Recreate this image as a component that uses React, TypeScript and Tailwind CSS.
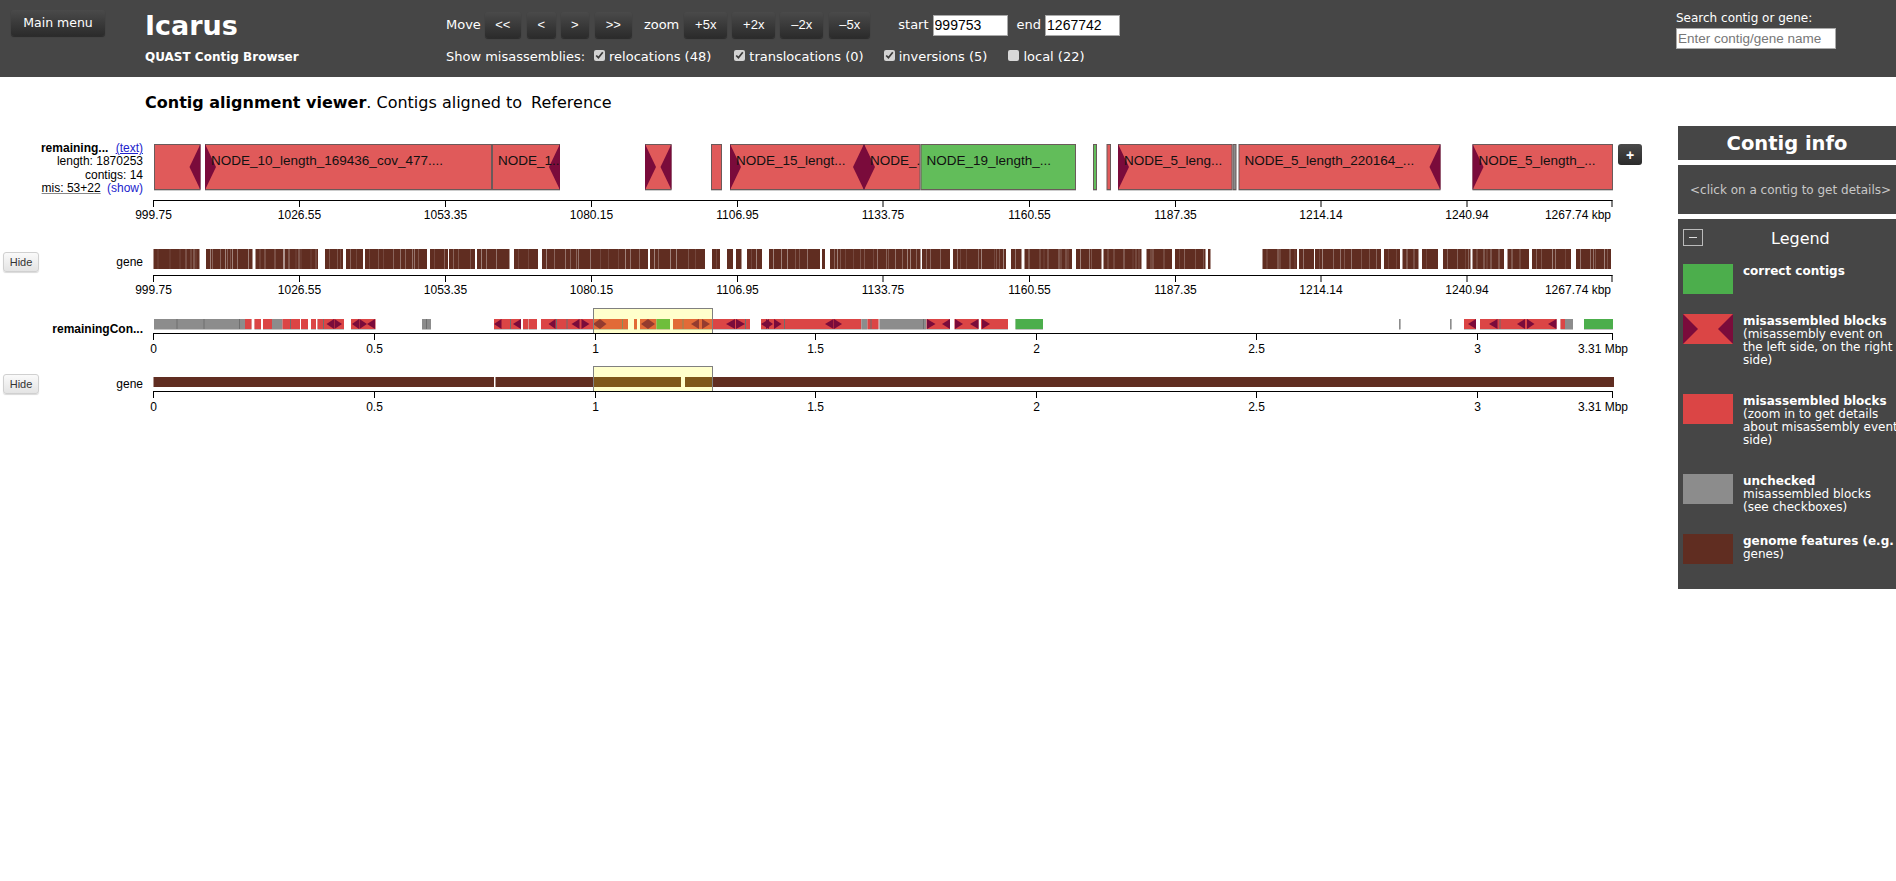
import type { ReactNode } from "react"

const RED = "#e05a5a"
const GREEN = "#62bd5a"
const DARK = "#7a0b3b"
const ORED = "#db4545"
const OGREY = "#8c8c8c"
const OGREEN = "#4cae4c"
const BROWN = "#602d21"

type Block = { x1: number; x2: number; fill: string; label?: string; left?: boolean; right?: boolean }

const topBlocks: Block[] = [
  { x1: 154, x2: 200.5, fill: RED, right: true },
  { x1: 205, x2: 492, fill: RED, left: true, label: "NODE_10_length_169436_cov_477...." },
  { x1: 492, x2: 560, fill: RED, right: true, label: "NODE_1..." },
  { x1: 645, x2: 671.5, fill: RED, left: true, right: true },
  { x1: 711, x2: 722, fill: RED },
  { x1: 730, x2: 864, fill: RED, left: true, right: true, label: "NODE_15_lengt..." },
  { x1: 864, x2: 920.5, fill: RED, left: true, label: "NODE_..." },
  { x1: 920.5, x2: 1076, fill: GREEN, label: "NODE_19_length_..." },
  { x1: 1093, x2: 1097, fill: GREEN },
  { x1: 1106.5, x2: 1111, fill: RED },
  { x1: 1118, x2: 1232.5, fill: RED, left: true, label: "NODE_5_leng..." },
  { x1: 1232.5, x2: 1236.5, fill: "#8a8a8a" },
  { x1: 1238.5, x2: 1440.5, fill: RED, right: true, label: "NODE_5_length_220164_..." },
  { x1: 1472.5, x2: 1613, fill: RED, left: true, label: "NODE_5_length_..." },
]

// [start, end, colour]
const overview: [number, number, string][] = [
  [154, 245, OGREY],
  [245, 251.5, ORED], [254.5, 261, ORED], [263, 272, ORED], [272, 282.5, OGREY],
  [282.5, 300, ORED], [301, 308, ORED], [311, 316, ORED],
  [317.5, 344, ORED], [351, 375.5, ORED], [422, 431, OGREY],
  [494, 521, ORED], [523, 528.5, ORED], [529, 537, ORED],
  [541, 628, ORED],
  [634, 637, ORED], [640, 656.5, ORED], [656.5, 670, OGREEN],
  [673, 750, ORED],
  [761, 861.5, ORED], [861.5, 867.5, OGREY], [867.5, 878.5, ORED],
  [879.5, 926.5, OGREY], [926.5, 950, ORED], [954.5, 978.5, ORED], [981, 1008, ORED],
  [1015.5, 1043, OGREEN], [1399, 1400.5, OGREY], [1450, 1451.5, OGREY],
  [1464, 1476, ORED], [1480, 1556.5, ORED], [1560.5, 1565, ORED], [1565, 1573, OGREY],
  [1584, 1613, OGREEN],
]

// thin lines where two contigs touch
const overviewDividers = [
  176.5, 203.5, 239, 290, 323, 426, 510, 556, 566.5, 622, 682.5, 745, 784, 870.5, 923, 1499.5,
]

// [tip x, base x]
const overviewMarks: [number, number][] = [
  [326.5, 334], [342, 334.5], [352, 359], [367, 359.5], [367, 375], [494, 501.5], [513, 521],
  [548.5, 555.5], [571.5, 579.5], [589.5, 581.5], [593, 600], [606.5, 600], [641, 648], [655, 648],
  [691, 699], [710, 702], [726, 735], [745, 736], [761, 769], [773, 766], [781.5, 774],
  [825, 833.5], [842, 834], [935.5, 927], [942, 950], [963, 955], [970, 978.5], [990, 982],
  [1468, 1476], [1489, 1497.5], [1517, 1525], [1534.5, 1527], [1548, 1556.5],
]

const geneRuns: [number, number][] = [
  [153.5, 199.5], [206, 252.5], [255.5, 283.5], [284.5, 318], [325, 343], [346, 363], [365, 427], [430, 448],
  [449, 475], [477, 509.5], [514, 538], [542, 648], [650, 705], [712, 720], [727, 733], [736, 741.5], [747, 762],
  [769, 820], [822, 825], [830, 920.5], [922, 950], [953, 990], [990, 1006], [1011, 1021.5], [1024.5, 1072],
  [1076, 1101.5], [1103.5, 1141.5], [1146.5, 1172], [1175, 1205.5], [1208, 1210.5], [1262.5, 1297], [1299, 1314],
  [1315, 1381], [1384, 1400], [1402.5, 1418.5], [1422, 1438], [1443, 1470.5], [1472.5, 1504], [1507.5, 1529],
  [1532, 1571], [1576, 1611],
]

// thin pale gaps between the genes
function geneLines() {
  const out: { x: number; o: number }[] = []
  let seed = 17
  for (const [a, b] of geneRuns) {
    let x = a + 4
    while (x < b - 2) {
      seed = (seed * 137 + 29) % 1009
      out.push({ x, o: 0.12 + (seed % 5) * 0.07 })
      x += 2 + (seed % 11)
    }
  }
  return out
}

const kbpTicks = [
  [153.5, "999.75"], [299.5, "1026.55"], [445.5, "1053.35"], [591.5, "1080.15"], [737.5, "1106.95"], [883, "1133.75"],
  [1029.5, "1160.55"], [1175.5, "1187.35"], [1321, "1214.14"], [1467, "1240.94"],
] as [number, string][]

const mbpTicks = [
  [153.5, "0"], [374.5, "0.5"], [595.5, "1"], [815.5, "1.5"], [1036.5, "2"], [1256.5, "2.5"], [1477.5, "3"],
] as [number, string][]

function Axis({ y, ticks, last, lastX, dy = 19 }: { y: number; ticks: [number, string][]; last: ReactNode; lastX: number; dy?: number }) {
  return (
    <g fontFamily="'Liberation Sans', Arial, sans-serif" fontSize="12" fill="#000">
      <line x1={153} x2={lastX + 0.5} y1={y + 0.5} y2={y + 0.5} stroke="#000" />
      {ticks.map(([x, t]) => (
        <g key={t}>
          <line x1={x} x2={x} y1={y} y2={y + 7} stroke="#000" />
          <text x={x} y={y + dy} textAnchor="middle">{t}</text>
        </g>
      ))}
      <line x1={lastX} x2={lastX} y1={y} y2={y + 7} stroke="#000" />
      {last}
    </g>
  )
}

function HeadBtn({ children, w, ml }: { children: ReactNode; w: string; ml: string }) {
  return (
    <button className={`${w} ${ml} h-[26px] rounded-[3px] bg-linear-to-b from-[#4a4a4a] to-[#2b2b2b] text-white text-[13px] font-['Liberation_Sans',Arial,sans-serif] shadow-[0_1px_1px_rgba(0,0,0,0.4)]`}>
      {children}
    </button>
  )
}

function Check({ checked, label, ml }: { checked: boolean; label: string; ml: string }) {
  return (
    <label className={`${ml} flex items-center`}>
      {checked ? (
        <input type="checkbox" defaultChecked className="w-[11px] h-[11px] m-0 mb-[4px] accent-[#d4d4d4]" />
      ) : (
        <input type="checkbox" className="w-[11px] h-[11px] m-0 mb-[4px] appearance-none rounded-[2px] bg-[#d8d8d8]" />
      )}
      <span className="ml-[4px] whitespace-nowrap">{label}</span>
    </label>
  )
}

function HideBtn() {
  return (
    <button className="ml-[3px] w-[36px] h-[20px] rounded-[3px] border border-[#d0d0d0] bg-linear-to-b from-[#fafafa] to-[#e4e4e4] text-[11px] text-[#333] shadow-[0_1px_1px_rgba(0,0,0,0.15)]">
      Hide
    </button>
  )
}

function LegendRow({ swatch, title, h, children }: { swatch: ReactNode; title: string; h: string; children?: ReactNode }) {
  return (
    <div className={`flex ${h}`}>
      <div className="w-[50px] h-[30px] shrink-0">{swatch}</div>
      <div className="ml-[10px] mt-[1px] text-[12px] leading-[13px] text-white whitespace-nowrap">
        <div className="font-bold">{title}</div>
        {children}
      </div>
    </div>
  )
}

function TopTrack() {
  const y1 = 144
  const y2 = 190
  const mid = 167
  return (
    <svg width="1470" height="85" viewBox="146 140 1470 85" className="block shrink-0 overflow-visible">
      {topBlocks.map((b, i) => (
        <g key={i}>
          <rect x={b.x1} y={y2} width={b.x2 - b.x1} height={1} fill="#ccc" />
          <rect x={b.x1 + 0.5} y={y1 + 0.5} width={b.x2 - b.x1 - 1} height={y2 - y1 - 1} fill={b.fill} stroke="#6a5a5a" />
          {b.left && <polygon points={`${b.x1},${y1} ${b.x1},${y2} ${b.x1 + 11},${mid}`} fill={DARK} />}
          {b.right && <polygon points={`${b.x2},${y1} ${b.x2},${y2} ${b.x2 - 11},${mid}`} fill={DARK} />}
        </g>
      ))}
      {topBlocks.map((b, i) =>
        b.label ? (
          <svg key={i} x={b.x1} y={y1} width={b.x2 - b.x1} height={y2 - y1}>
            <text x={6} y={21} fontFamily="'Liberation Sans', Arial, sans-serif" fontSize="13.5" fill="#111">
              {b.label}
            </text>
          </svg>
        ) : null
      )}
      <Axis
        y={200}
        ticks={kbpTicks}
        lastX={1612}
        last={<text x={1611} y={219} textAnchor="end">1267.74 kbp</text>}
      />
    </svg>
  )
}

function GeneTrack() {
  return (
    <svg width="1470" height="55" viewBox="146 245 1470 55" className="block shrink-0 overflow-visible">
      {geneRuns.map(([a, b]) => (
        <rect key={a} x={a} y={249} width={b - a} height={20} fill={BROWN} />
      ))}
      {geneLines().map((l, i) => (
        <rect key={i} x={l.x} y={249} width={1} height={20} fill="#fff" opacity={l.o} />
      ))}
      <Axis
        y={275}
        ticks={kbpTicks}
        lastX={1612}
        last={<text x={1611} y={294} textAnchor="end">1267.74 kbp</text>}
      />
    </svg>
  )
}

function Highlight({ y, h }: { y: number; h: number }) {
  return <rect x={593.5} y={y} width={119} height={h} fill="#ffff00" fillOpacity={0.2} stroke="#808080" />
}

function OverviewTrack() {
  return (
    <svg width="1490" height="57" viewBox="146 305 1490 57" className="block shrink-0 overflow-visible">
      {overview.map(([a, b, c]) => (
        <g key={a}>
          <rect x={a} y={319} width={b - a} height={11} fill="#c4c4c4" />
          <rect x={a} y={319} width={b - a} height={10} fill={c} />
        </g>
      ))}
      {overviewDividers.map((x) => (
        <rect key={x} x={x} y={319} width={1} height={10} fill="#6e6e6e" />
      ))}
      {overviewMarks.map(([tip, base], i) => (
        <polygon key={i} points={`${base},319 ${base},329 ${tip},324`} fill={DARK} />
      ))}
      <Highlight y={308.5} h={25} />
      <Axis
        y={333}
        ticks={mbpTicks}
        dy={20}
        lastX={1612.5}
        last={<text x={1628} y={353} textAnchor="end">3.31 Mbp</text>}
      />
    </svg>
  )
}

function GeneOverviewTrack() {
  return (
    <svg width="1490" height="53" viewBox="146 362 1490 53" className="block shrink-0 overflow-visible">
      <rect x={153.5} y={377} width={340.5} height={10} fill={BROWN} />
      <rect x={495.5} y={377} width={185.5} height={10} fill={BROWN} />
      <rect x={685} y={377} width={929} height={10} fill={BROWN} />
      <Highlight y={366.5} h={25} />
      <Axis
        y={391}
        ticks={mbpTicks}
        dy={20}
        lastX={1612.5}
        last={<text x={1628} y={411} textAnchor="end">3.31 Mbp</text>}
      />
    </svg>
  )
}

export default function App() {
  return (
    <div className="w-[1896px] min-h-[881px] bg-white text-black font-['DejaVu_Sans',Verdana,sans-serif] overflow-hidden">
      <header className="h-[77px] bg-[#464646] text-white flex">
        <div className="w-[145px] shrink-0 pl-[11px] pt-[10px]">
          <button className="w-[94px] h-[26px] rounded-[3px] bg-linear-to-b from-[#4a4a4a] to-[#2b2b2b] text-[12.5px] text-white shadow-[0_1px_1px_rgba(0,0,0,0.4)]">
            Main menu
          </button>
        </div>
        <div className="w-[301px] shrink-0">
          <div className="mt-[9px] text-[27px] leading-[34px] font-bold">Icarus</div>
          <div className="mt-[6px] text-[12px] leading-[16px] font-bold">QUAST Contig Browser</div>
        </div>
        <div className="w-[1230px] shrink-0 text-[13px]">
          <div className="mt-[12px] flex items-center h-[26px]">
            <span>Move</span>
            <HeadBtn w="w-[36px]" ml="ml-[4px]">&lt;&lt;</HeadBtn>
            <HeadBtn w="w-[29px]" ml="ml-[6px]">&lt;</HeadBtn>
            <HeadBtn w="w-[28px]" ml="ml-[5px]">&gt;</HeadBtn>
            <HeadBtn w="w-[37px]" ml="ml-[6px]">&gt;&gt;</HeadBtn>
            <span className="ml-[12px]">zoom</span>
            <HeadBtn w="w-[43px]" ml="ml-[5px]">+5x</HeadBtn>
            <HeadBtn w="w-[43px]" ml="ml-[5px]">+2x</HeadBtn>
            <HeadBtn w="w-[43px]" ml="ml-[5px]">–2x</HeadBtn>
            <HeadBtn w="w-[41px]" ml="ml-[6px]">–5x</HeadBtn>
            <span className="ml-[28px]">start</span>
            <input
              readOnly
              value="999753"
              className="ml-[4px] w-[75px] h-[21px] bg-white border border-[#aaa] pl-[1px] text-black text-[14px] font-['Liberation_Sans',Arial,sans-serif]"
            />
            <span className="ml-[9px]">end</span>
            <input
              readOnly
              value="1267742"
              className="ml-[4px] w-[75px] h-[21px] bg-white border border-[#aaa] pl-[1px] text-black text-[14px] font-['Liberation_Sans',Arial,sans-serif]"
            />
          </div>
          <div className="mt-[9px] flex items-center h-[20px]">
            <span>Show misassemblies:</span>
            <Check checked label="relocations (48)" ml="ml-[9px]" />
            <Check checked label="translocations (0)" ml="ml-[23px]" />
            <Check checked label="inversions (5)" ml="ml-[20px]" />
            <Check checked={false} label="local (22)" ml="ml-[21px]" />
          </div>
        </div>
        <div className="flex-1 pt-[10px] text-[12px] leading-[16px]">
          <div>Search contig or gene:</div>
          <input
            placeholder="Enter contig/gene name"
            className="mt-[2px] block w-[160px] h-[21px] bg-white border border-[#aaa] pl-[1px] text-[13.5px] text-black placeholder:text-[#777] font-['Liberation_Sans',Arial,sans-serif]"
          />
        </div>
      </header>

      <div className="flex">
        <main className="w-[1678px] shrink-0">
          <div className="h-[63px] pl-[145px] pt-[16px] text-[16px] leading-[20px] whitespace-nowrap">
            <strong>Contig alignment viewer</strong>. Contigs aligned to <span className="ml-[4px]">Reference</span>
          </div>

          <div className="flex h-[85px] font-['Liberation_Sans',Arial,sans-serif] text-[12px]">
            <div className="w-[146px] shrink-0 pr-[3px] pt-[2px] text-right leading-[13.4px]">
              <div>
                <b>remaining...</b> <a className="ml-[4px] text-[#2222cc] underline">(text)</a>
              </div>
              <div>length: 1870253</div>
              <div>contigs: 14</div>
              <div>
                <span className="underline decoration-[#888]">mis: 53+22</span> <a className="ml-[3px] text-[#2222cc]">(show)</a>
              </div>
            </div>
            <TopTrack />
            <button className="ml-[2px] mt-[4px] w-[24px] h-[21px] rounded-[3px] bg-linear-to-b from-[#4a4a4a] to-[#2b2b2b] text-white text-[14px] font-bold leading-none">
              +
            </button>
          </div>

          <div className="mt-[20px] flex h-[55px] font-['Liberation_Sans',Arial,sans-serif] text-[12px]">
            <div className="w-[146px] shrink-0 pr-[3px] pt-[7px] flex justify-between">
              <HideBtn />
              <span className="mt-[1px]">gene</span>
            </div>
            <GeneTrack />
          </div>

          <div className="mt-[5px] flex h-[57px] font-['Liberation_Sans',Arial,sans-serif] text-[12px]">
            <div className="w-[146px] shrink-0 pr-[3px] pt-[15px] text-right font-bold">remainingCon...</div>
            <OverviewTrack />
          </div>

          <div className="flex h-[53px] font-['Liberation_Sans',Arial,sans-serif] text-[12px]">
            <div className="w-[146px] shrink-0 pr-[3px] pt-[12px] flex justify-between">
              <HideBtn />
              <span className="mt-[1px]">gene</span>
            </div>
            <GeneOverviewTrack />
          </div>
        </main>

        <aside className="w-[218px] shrink-0 pt-[49px] text-white">
          <div className="h-[34px] bg-[#464646] text-center text-[19.5px] leading-[36px] font-bold">Contig info</div>
          <div className="mt-[5px] h-[49px] bg-[#464646] flex items-center pl-[12px] text-[12px] text-[#c8c8c8] whitespace-nowrap">
            &lt;click on a contig to get details&gt;
          </div>
          <div className="mt-[5px] h-[370px] bg-[#464646] pl-[5px] pt-[10px] overflow-hidden">
            <div className="flex items-center h-[17px]">
              <div className="w-[20px] h-[17px] border border-[#bbb] flex items-center justify-center">
                <div className="w-[8px] h-[1px] bg-[#ddd]" />
              </div>
              <div className="ml-[68px] mt-[3px] text-[16px] leading-[20px]">Legend</div>
            </div>
            <div className="mt-[18px]">
              <LegendRow h="h-[50px]" title="correct contigs" swatch={<div className="w-full h-full bg-[#4cae4c]" />} />
              <LegendRow
                h="h-[80px]"
                title="misassembled blocks"
                swatch={
                  <svg width="50" height="30" viewBox="0 0 50 30" className="block">
                    <rect width="50" height="30" fill="#db4545" />
                    <polygon points="0,0 0,30 15,15" fill={DARK} />
                    <polygon points="50,0 50,30 35,15" fill={DARK} />
                  </svg>
                }
              >
                <div>(misassembly event on</div>
                <div>the left side, on the right</div>
                <div>side)</div>
              </LegendRow>
              <LegendRow h="h-[80px]" title="misassembled blocks" swatch={<div className="w-full h-full bg-[#db4545]" />}>
                <div>(zoom in to get details</div>
                <div>about misassembly event</div>
                <div>side)</div>
              </LegendRow>
              <LegendRow h="h-[60px]" title="unchecked" swatch={<div className="w-full h-full bg-[#8c8c8c]" />}>
                <div>misassembled blocks</div>
                <div>(see checkboxes)</div>
              </LegendRow>
              <LegendRow h="h-[30px]" title="genome features (e.g." swatch={<div className="w-full h-full bg-[#602d21]" />}>
                <div>genes)</div>
              </LegendRow>
            </div>
          </div>
        </aside>
      </div>
    </div>
  )
}
